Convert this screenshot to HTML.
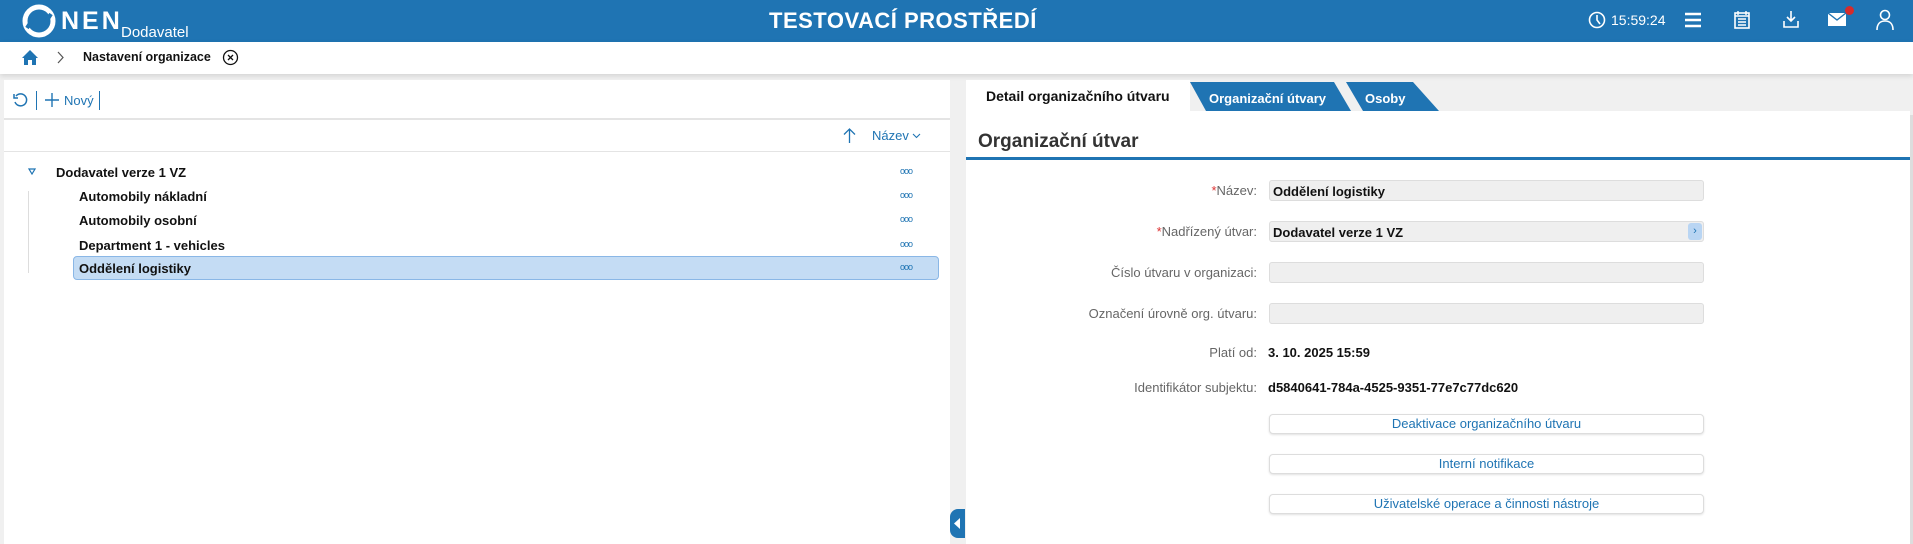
<!DOCTYPE html>
<html><head><meta charset="utf-8"><style>
*{box-sizing:border-box;margin:0;padding:0}
body{width:1913px;height:544px;overflow:hidden;background:#f0f0f0;font-family:"Liberation Sans",Arial,sans-serif;position:relative}
.abs{position:absolute}
.hdr{left:0;top:0;width:1913px;height:42px;background:#1f74b3}
.bc{left:0;top:42px;width:1913px;height:32px;background:#fff;box-shadow:0 2px 5px rgba(0,0,0,.12)}
.lp{left:4px;top:80px;width:946px;height:464px;background:#fff}
.rp{left:966px;top:111px;width:944px;height:433px;background:#fff}
.t{white-space:nowrap}
.b{font-weight:bold}
.lbl{right:656px;font-size:13px;color:#666;text-align:right}
.inp{left:1269px;width:435px;height:21px;background:#efefef;border:1px solid #ddd;border-radius:3px;font-size:13px;font-weight:bold;color:#111;padding:3px 0 0 3px}
.btn{left:1269px;width:435px;height:20px;background:#fff;border:1px solid #ddd;border-radius:4px;box-shadow:0 1px 2px rgba(0,0,0,.12);font-size:13px;color:#1f74b3;text-align:center;line-height:18px}
.row{font-size:13px;font-weight:bold;color:#111}
.dots{left:900px;font-size:9px;color:#1f74b3;letter-spacing:-1px}
.req{color:#d33}
</style></head><body>
<div class="abs hdr"></div>
<svg class="abs" style="left:22px;top:4px" width="34" height="34" viewBox="0 0 34 34"><circle cx="17" cy="17" r="14" fill="none" stroke="#fff" stroke-width="5"/><path d="M5 24 L14 10" stroke="#1f74b3" stroke-width="4"/><path d="M20 24 L29 10" stroke="#1f74b3" stroke-width="4"/></svg>
<div class="abs t b" style="left:61px;top:7px;font-size:25px;color:#fff;letter-spacing:3px">NEN</div>
<div class="abs t" style="left:121px;top:24px;font-size:15px;color:#fff">Dodavatel</div>
<div class="abs t b" style="left:769px;top:8px;font-size:22px;color:#fff;letter-spacing:.5px">TESTOVACÍ PROSTŘEDÍ</div>
<svg class="abs" style="left:1588px;top:11px" width="18" height="18" viewBox="0 0 18 18"><circle cx="9" cy="9" r="7.5" fill="none" stroke="#fff" stroke-width="1.6"/><path d="M9 4v5l3 4" fill="none" stroke="#fff" stroke-width="1.6"/></svg>
<div class="abs t" style="left:1611px;top:12px;font-size:14px;color:#fff">15:59:24</div>
<svg class="abs" style="left:1684px;top:12px" width="18" height="16"><path d="M1 2h16M1 8h16M1 14h16" stroke="#fff" stroke-width="2.4"/></svg>
<svg class="abs" style="left:1734px;top:10px" width="16" height="19"><rect x="1" y="3" width="14" height="15" fill="none" stroke="#fff" stroke-width="1.6"/><path d="M1 6h14M4 1v4M12 1v4M4 9h8M4 12h8M4 15h8" stroke="#fff" stroke-width="1.4"/></svg>
<svg class="abs" style="left:1782px;top:10px" width="18" height="18"><path d="M9 1v10M5 7l4 4 4-4M2 11v6h14v-6" fill="none" stroke="#fff" stroke-width="1.6"/></svg>
<svg class="abs" style="left:1827px;top:12px" width="20" height="15"><rect x="1" y="1" width="18" height="13" fill="#fff"/><path d="M1 1l9 7 9-7" fill="none" stroke="#1f74b3" stroke-width="1.4"/></svg>
<div class="abs" style="left:1845px;top:6px;width:9px;height:9px;border-radius:50%;background:#d52b2b"></div>
<svg class="abs" style="left:1876px;top:9px" width="18" height="22"><circle cx="9" cy="6" r="4.5" fill="none" stroke="#fff" stroke-width="1.6"/><path d="M1 21c0-6 3-9 8-9s8 3 8 9" fill="none" stroke="#fff" stroke-width="1.6"/></svg>

<div class="abs bc"></div>
<svg class="abs" style="left:21px;top:49px" width="18" height="17"><path d="M9 1L1 9h2v7h4v-5h4v5h4V9h2z" fill="#1f74b3"/></svg>
<svg class="abs" style="left:57px;top:51px" width="8" height="13"><path d="M1 1l5 5.5L1 12" fill="none" stroke="#555" stroke-width="1.2"/></svg>
<div class="abs t b" style="left:83px;top:50px;font-size:12.5px;color:#111">Nastavení organizace</div>
<svg class="abs" style="left:222px;top:49px" width="17" height="17"><circle cx="8.5" cy="8.5" r="7" fill="none" stroke="#111" stroke-width="1.3"/><path d="M6 6l5 5M11 6l-5 5" stroke="#111" stroke-width="1.3"/></svg>

<div class="abs lp"></div>
<svg class="abs" style="left:12px;top:92px" width="17" height="17"><path d="M4 4A6 6 0 1 1 3 10" fill="none" stroke="#1f74b3" stroke-width="1.5"/><path d="M2 2v4h4" fill="none" stroke="#1f74b3" stroke-width="1.5"/></svg>
<div class="abs" style="left:36px;top:91px;width:1px;height:19px;background:#1f74b3"></div>
<svg class="abs" style="left:45px;top:93px" width="14" height="14"><path d="M7 0v14M0 7h14" stroke="#1f74b3" stroke-width="1.4"/></svg>
<div class="abs t" style="left:64px;top:93px;font-size:13px;color:#1f74b3">Nový</div>
<div class="abs" style="left:99px;top:91px;width:1px;height:19px;background:#1f74b3"></div>
<div class="abs" style="left:4px;top:118px;width:946px;height:2px;background:#e4e4e4"></div>
<svg class="abs" style="left:843px;top:128px" width="13" height="15"><path d="M6.5 15V1M1 6.5l5.5-5.5 5.5 5.5" fill="none" stroke="#1f74b3" stroke-width="1.3"/></svg>
<div class="abs t" style="left:872px;top:128px;font-size:13px;color:#1f74b3">Název</div>
<svg class="abs" style="left:912px;top:133px" width="9" height="6"><path d="M1 1l3.5 3.5L8 1" fill="none" stroke="#1f74b3" stroke-width="1.1"/></svg>
<div class="abs" style="left:4px;top:151px;width:946px;height:1px;background:#e4e4e4"></div>
<svg class="abs" style="left:28px;top:168px" width="8" height="7"><path d="M1 1h6L4 6z" fill="none" stroke="#1f74b3" stroke-width="1.2"/></svg>
<div class="abs" style="left:28px;top:191px;width:1px;height:82px;background:#ddd"></div>
<div class="abs" style="left:73px;top:256px;width:866px;height:24px;background:#c4dcf4;border:1px solid #8ab7e6;border-radius:4px"></div>
<div class="abs t row" style="left:56px;top:165px">Dodavatel verze 1 VZ</div>
<div class="abs t row" style="left:79px;top:189px">Automobily nákladní</div>
<div class="abs t row" style="left:79px;top:213px">Automobily osobní</div>
<div class="abs t row" style="left:79px;top:238px">Department 1 - vehicles</div>
<div class="abs t row" style="left:79px;top:261px">Oddělení logistiky</div>
<div class="abs t dots" style="top:166px">ooo</div>
<div class="abs t dots" style="top:190px">ooo</div>
<div class="abs t dots" style="top:214px">ooo</div>
<div class="abs t dots" style="top:239px">ooo</div>
<div class="abs t dots" style="top:262px">ooo</div>
<div class="abs" style="left:950px;top:509px;width:15px;height:29px;background:#1f74b3;border-radius:8px 0 0 8px"></div>
<svg class="abs" style="left:954px;top:518px" width="7" height="11"><path d="M6 0v11L0 5.5z" fill="#fff"/></svg>

<div class="abs" style="left:966px;top:80px;width:224px;height:31px;background:#fff"></div>
<div class="abs t b" style="left:986px;top:88px;font-size:14px;color:#111">Detail organizačního útvaru</div>
<svg class="abs" style="left:1186px;top:82px" width="260" height="30"><path d="M4 0H148L165 29H20z" fill="#1f74b3"/><path d="M160 0H227L253 29H177z" fill="#1f74b3"/></svg>
<div class="abs t b" style="left:1209px;top:91px;font-size:13px;color:#fff">Organizační útvary</div>
<div class="abs t b" style="left:1365px;top:91px;font-size:13px;color:#fff">Osoby</div>
<div class="abs rp"></div>
<div class="abs" style="left:1910px;top:115px;width:3px;height:429px;background:#ddd"></div>
<div class="abs t b" style="left:978px;top:131px;font-size:19px;color:#333">Organizační útvar</div>
<div class="abs" style="left:966px;top:157px;width:944px;height:3px;background:#1f74b3"></div>

<div class="abs t lbl" style="top:183px"><span class="req">*</span>Název:</div>
<div class="abs inp" style="top:180px">Oddělení logistiky</div>
<div class="abs t lbl" style="top:224px"><span class="req">*</span>Nadřízený útvar:</div>
<div class="abs inp" style="top:221px">Dodavatel verze 1 VZ</div>
<div class="abs" style="left:1688px;top:223px;width:14px;height:17px;background:#b9d5f3;border-radius:3px;color:#1f74b3;font-size:11px;text-align:center;line-height:16px">›</div>
<div class="abs t lbl" style="top:265px">Číslo útvaru v organizaci:</div>
<div class="abs inp" style="top:262px"></div>
<div class="abs t lbl" style="top:306px">Označení úrovně org. útvaru:</div>
<div class="abs inp" style="top:303px"></div>
<div class="abs t lbl" style="top:345px">Platí od:</div>
<div class="abs t b" style="left:1268px;top:345px;font-size:13px;color:#111">3. 10. 2025 15:59</div>
<div class="abs t lbl" style="top:380px">Identifikátor subjektu:</div>
<div class="abs t b" style="left:1268px;top:380px;font-size:13px;color:#111">d5840641-784a-4525-9351-77e7c77dc620</div>
<div class="abs btn" style="top:414px">Deaktivace organizačního útvaru</div>
<div class="abs btn" style="top:454px">Interní notifikace</div>
<div class="abs btn" style="top:494px">Uživatelské operace a činnosti nástroje</div>
</body></html>
